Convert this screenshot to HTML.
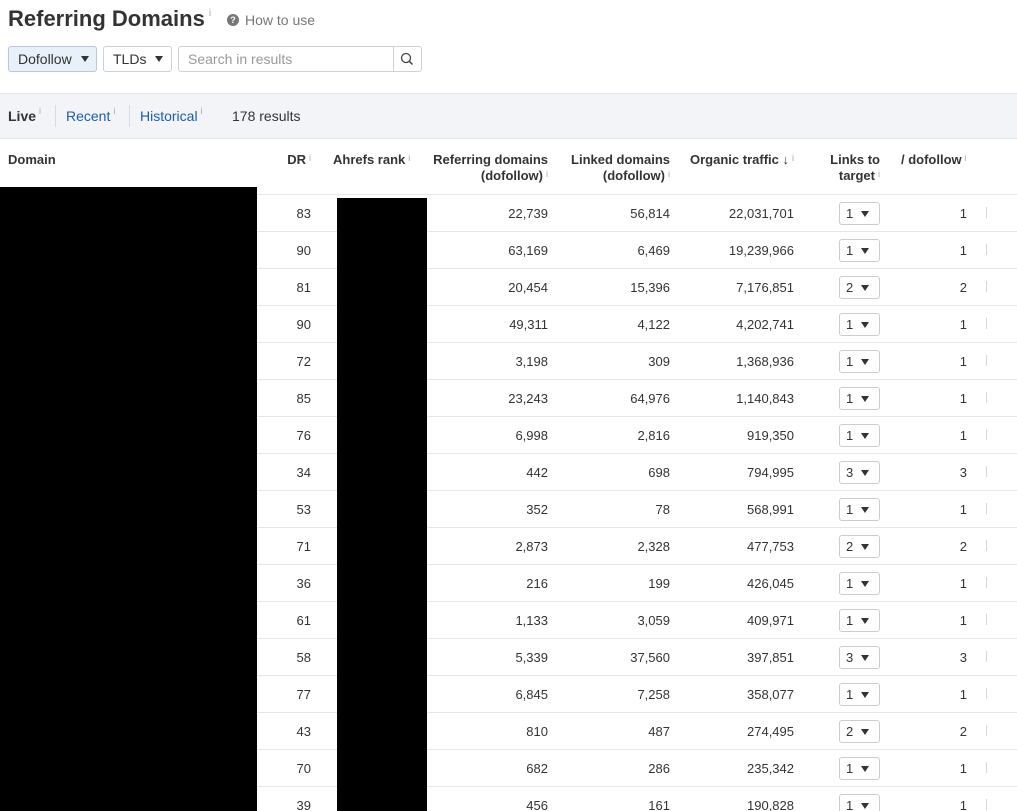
<!DOCTYPE html>
<html><head><meta charset="utf-8"><style>
*{margin:0;padding:0;box-sizing:border-box}
html,body{width:1017px;height:811px;overflow:hidden}
body{background:#fff;font-family:"Liberation Sans",Arial,sans-serif;font-size:13px;color:#333;position:relative}
.a{position:absolute;white-space:nowrap}
.i{font-size:9px;color:#aaa;vertical-align:top;margin-left:3px;position:relative;top:-2px;font-weight:normal}
.btn{position:absolute;top:46px;height:26px;border:1px solid #ccd2da;border-radius:3px;background:#fff;font-size:14px;line-height:24px;padding-left:9px;color:#333}
.tri{display:inline-block;width:0;height:0;border-left:4px solid transparent;border-right:4px solid transparent;border-top:6px solid #333;vertical-align:middle;margin-left:9px;position:relative;top:-1px}
.hl{position:absolute;left:0;width:1017px;height:1px;background:#e6e6e6}
.th{position:absolute;font-weight:bold;text-align:right;line-height:16px;color:#333}
.n{position:absolute;text-align:right;font-size:13px;color:#333}
.dd{position:absolute;left:839px;width:41px;height:23px;border:1px solid #ccc;border-radius:3px;font-size:13px;line-height:21px;padding-left:6px}
.dd .tri{margin-left:8px}
.tk{position:absolute;left:986px;width:1px;height:11px;background:#d6d6d6}
</style></head><body>
<div class="a" style="left:8px;top:6px;font-size:22px;font-weight:bold;color:#333">Referring Domains<span class="i" style="font-size:10px;top:2px;margin-left:4px">i</span></div>
<div class="a" style="left:227px;top:14px;width:12px;height:12px;border-radius:50%;background:#777;color:#fff;font-size:9px;font-weight:bold;text-align:center;line-height:12px">?</div>
<div class="a" style="left:245px;top:12px;font-size:14px;color:#777">How to use</div>
<div class="btn" style="left:8px;width:89px;background:#e8f0f9;border-color:#b7c9de">Dofollow<span class="tri"></span></div>
<div class="btn" style="left:103px;width:69px">TLDs<span class="tri"></span></div>
<div class="btn" style="left:178px;width:244px;color:#999;">Search in results
<div style="position:absolute;left:214px;top:0;width:1px;height:24px;background:#ccd2da"></div>
<svg style="position:absolute;left:221px;top:5px" width="14" height="14" viewBox="0 0 14 14"><circle cx="6" cy="6" r="4.5" fill="none" stroke="#444" stroke-width="1.3"/><path d="M9.3 9.3L12.5 12.5" stroke="#444" stroke-width="1.5"/></svg></div>
<div class="a" style="left:0;top:93px;width:1017px;height:46px;background:#f3f4f7;border-top:1px solid #e3e5ea;border-bottom:1px solid #e3e5ea"></div>
<div class="a" style="left:8px;top:108px;font-size:14px;font-weight:bold;color:#333">Live<span class="i">i</span></div>
<div class="a" style="left:55px;top:105px;width:1px;height:22px;background:#d8dbe0"></div>
<div class="a" style="left:66px;top:108px;font-size:14px;color:#1a5cb0">Recent<span class="i">i</span></div>
<div class="a" style="left:129px;top:105px;width:1px;height:22px;background:#d8dbe0"></div>
<div class="a" style="left:140px;top:108px;font-size:14px;color:#1a5cb0">Historical<span class="i">i</span></div>
<div class="a" style="left:232px;top:108px;font-size:14px;color:#333">178 results</div>
<div class="th" style="left:8px;top:152px;text-align:left">Domain</div>
<div class="th" style="left:260px;width:51px;top:152px">DR<span class="i">i</span></div>
<div class="th" style="left:333px;top:152px;text-align:left">Ahrefs rank<span class="i">i</span></div>
<div class="th" style="left:420px;width:128px;top:152px">Referring domains<br>(dofollow)<span class="i">i</span></div>
<div class="th" style="left:555px;width:115px;top:152px">Linked domains<br>(dofollow)<span class="i">i</span></div>
<div class="th" style="left:680px;width:114px;top:152px">Organic traffic<span> &#8595;</span><span class="i">i</span></div>
<div class="th" style="left:800px;width:80px;top:152px">Links to<br>target<span class="i">i</span></div>
<div class="th" style="left:901px;top:152px;text-align:left">/ dofollow<span class="i">i</span></div>
<div id="rows"></div>
<div class="a" style="left:0;top:187px;width:257px;height:624px;background:#000"></div>
<div class="a" style="left:337px;top:198px;width:90px;height:613px;background:#000"></div>
<script>
var d=[[83,"22,739","56,814","22,031,701",1],[90,"63,169","6,469","19,239,966",1],[81,"20,454","15,396","7,176,851",2],[90,"49,311","4,122","4,202,741",1],[72,"3,198","309","1,368,936",1],[85,"23,243","64,976","1,140,843",1],[76,"6,998","2,816","919,350",1],[34,"442","698","794,995",3],[53,"352","78","568,991",1],[71,"2,873","2,328","477,753",2],[36,"216","199","426,045",1],[61,"1,133","3,059","409,971",1],[58,"5,339","37,560","397,851",3],[77,"6,845","7,258","358,077",1],[43,"810","487","274,495",2],[70,"682","286","235,342",1],[39,"456","161","190,828",1]];
var h='<div class="hl" style="top:194px"></div>';
d.forEach(function(r,i){var t=194+37*i,c=t+12;
h+='<div class="hl" style="top:'+(t+37)+'px"></div>';
h+='<div class="n" style="left:260px;width:51px;top:'+c+'px">'+r[0]+'</div>';
h+='<div class="n" style="left:430px;width:118px;top:'+c+'px">'+r[1]+'</div>';
h+='<div class="n" style="left:560px;width:110px;top:'+c+'px">'+r[2]+'</div>';
h+='<div class="n" style="left:680px;width:114px;top:'+c+'px">'+r[3]+'</div>';
h+='<div class="dd" style="top:'+(t+8)+'px">'+r[4]+'<span class="tri"></span></div>';
h+='<div class="n" style="left:920px;width:47px;top:'+c+'px">'+r[4]+'</div>';
h+='<div class="tk" style="top:'+(t+13)+'px"></div>';
});
document.getElementById("rows").innerHTML=h;
</script>
</body></html>
